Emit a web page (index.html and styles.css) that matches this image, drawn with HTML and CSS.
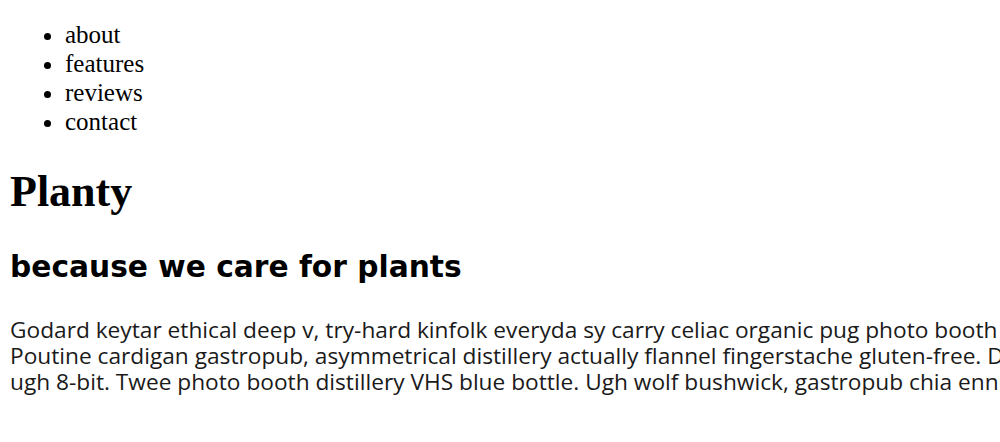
FILE: index.html
```html
<!DOCTYPE html>
<html>
<head>
<meta charset="utf-8">
<link rel="stylesheet" href="styles.css">
</head>
<body>
<nav class="nav">
  <ul class="nav-list">
    <li>about</li>
    <li>features</li>
    <li>reviews</li>
    <li>contact</li>
  </ul>
</nav>
<h1 class="title">Planty</h1>
<h2 class="subtitle">because we care for plants</h2>
<p class="intro">
  <span class="line">Godard keytar ethical deep v, try-hard kinfolk everyda sy carry celiac organic pug photo booth vinyl</span>
  <span class="line">Poutine cardigan gastropub, asymmetrical distillery actually flannel fingerstache gluten-free. DIY meggings</span>
  <span class="line">ugh 8-bit. Twee photo booth distillery VHS blue bottle. Ugh wolf bushwick, gastropub chia ennui.</span>
</p>
</body>
</html>
```
FILE: styles.css
```css
html, body {
  margin: 0;
  padding: 0;
  background: #fff;
  overflow: hidden;
}
body {
  padding: 0 10px;
  color: #000;
}
.nav-list {
  margin: 20px 0 0 0;
  padding-left: 55px;
  font-family: "Liberation Serif", serif;
  font-size: 25px;
  line-height: 29px;
}
.title {
  margin: 28px 0 0 0;
  font-family: "Liberation Serif", serif;
  font-weight: bold;
  font-size: 44px;
  line-height: 56px;
}
.subtitle {
  margin: 27px 0 0 0;
  font-family: "DejaVu Sans", sans-serif;
  font-weight: bold;
  font-size: 29.7px;
  line-height: 40px;
}
.intro {
  margin: 30px -10px 0 0;
  font-family: "Open Sans", sans-serif;
  font-size: 22.7px;
  line-height: 26px;
  color: #1a1a1a;
  white-space: nowrap;
  overflow: hidden;
}
.line {
  display: block;
}
```
